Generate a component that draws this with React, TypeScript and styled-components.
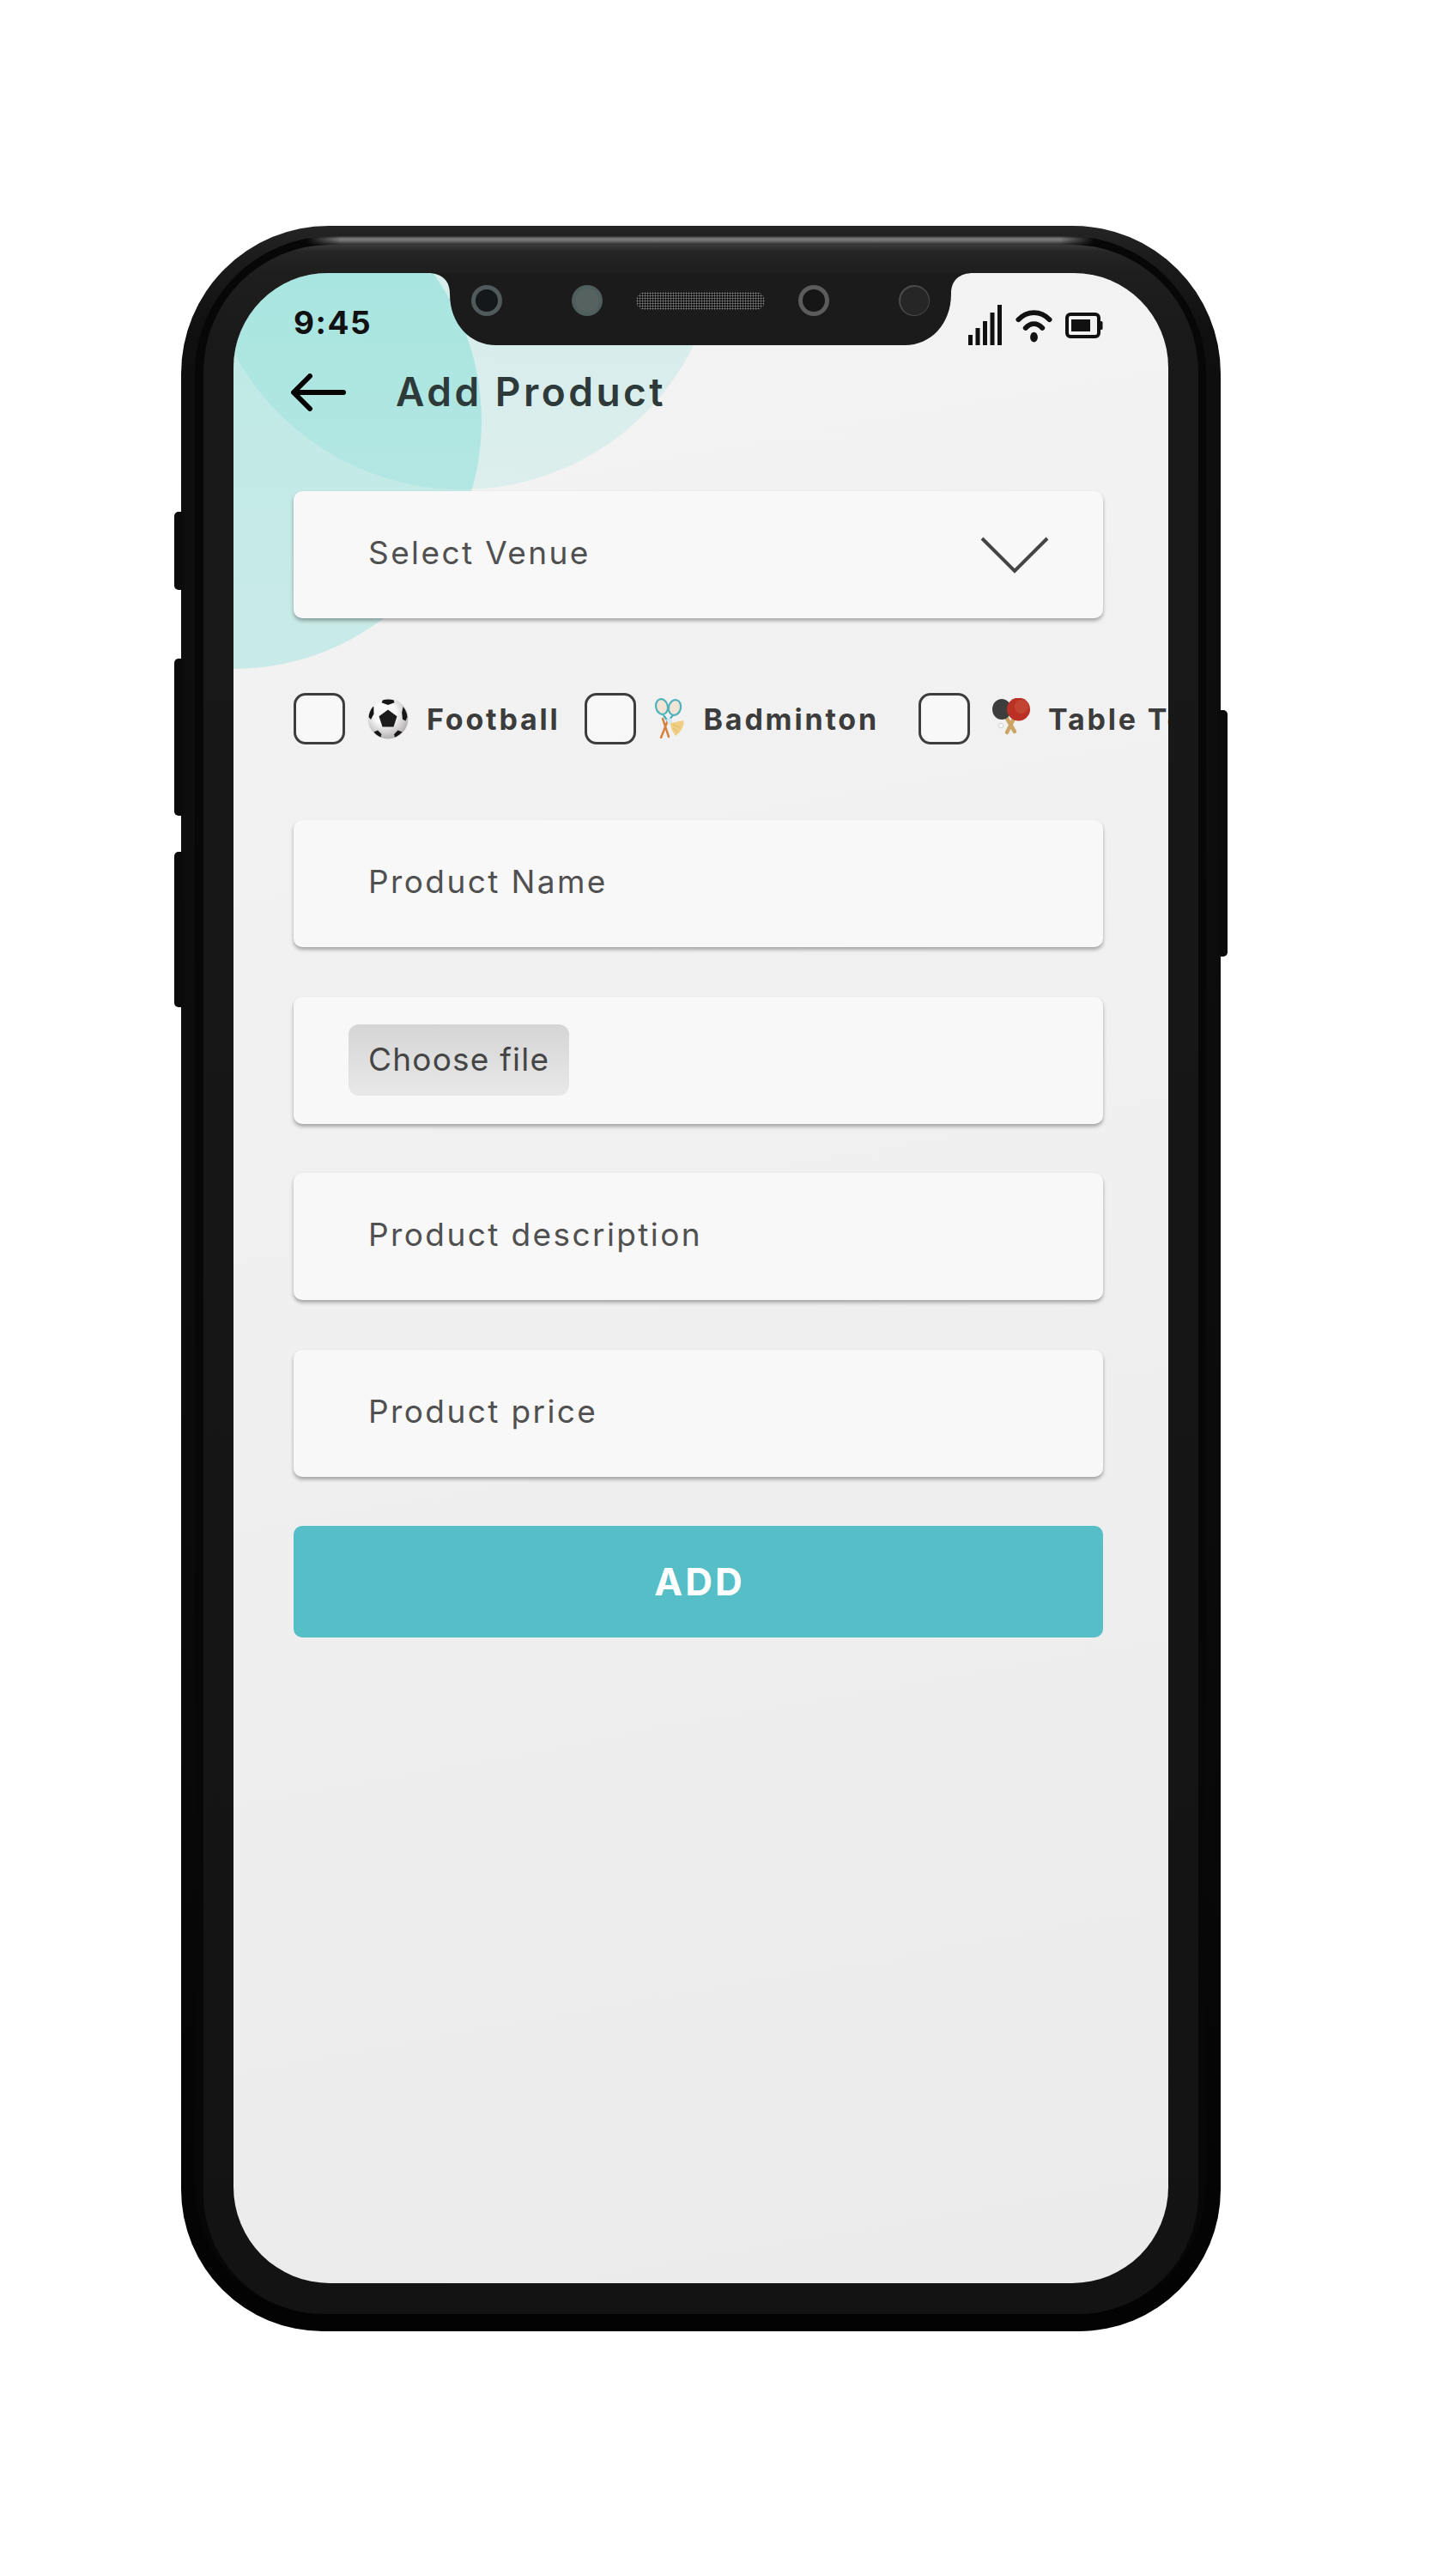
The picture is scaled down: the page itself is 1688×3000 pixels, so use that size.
import styled, { createGlobalStyle } from "styled-components";

const GlobalStyle = createGlobalStyle`
  html, body {
    margin: 0;
    background: #fff;
  }
  * {
    box-sizing: border-box;
  }
`;

const Page = styled.div`
  min-height: 3000px;
  padding: 263px 0 0 211px;
  background: #fff;
`;

const Frame = styled.div`
  position: relative;
  width: 1211px;
  height: 2452px;
  padding: 12px 17px 20px 16px;
  border-radius: 172px 172px 165px 165px;
  background: linear-gradient(to bottom, #242424 0, #1b1b1b 40px, #0f0f0f 130px, #0b0b0b 60%, #030303 100%);
`;

const Band = styled.div`
  position: relative;
  height: 100%;
  padding: 10px 9px 0 10px;
  border-radius: 160px 160px 150px 150px;
  background: #070707;

  &::before {
    content: "";
    position: absolute;
    top: 0;
    left: 130px;
    right: 130px;
    height: 10px;
    background: linear-gradient(to bottom, #2c2c2c, #7e7e7e 30%, #6e6e6e 55%, #2a2a2a);
    mask-image: linear-gradient(to right, transparent, #000 40px, #000 calc(100% - 40px), transparent);
  }
`;

const Bezel = styled.div`
  height: 100%;
  padding: 33px 35px 36px 35px;
  border-radius: 148px 148px 140px 140px;
  background: linear-gradient(to bottom, #3a3a3a 0, #252525 8px, #1e1e1e 33px, #191919 120px, #131313 100%);
`;

const SideButton = styled.div<{ $side: "left" | "right"; $top: number; $height: number }>`
  position: absolute;
  ${(p) => p.$side}: -8px;
  top: ${(p) => p.$top}px;
  width: 12px;
  height: ${(p) => p.$height}px;
  border-radius: ${(p) => (p.$side === "left" ? "5px 0 0 5px" : "0 5px 5px 0")};
  background: #0b0b0b;
`;

const Screen = styled.div`
  position: relative;
  height: 100%;
  overflow: hidden;
  padding: 37px 76px 0 70px;
  border-radius: 110px 110px 112px 112px;
  background: linear-gradient(170deg, #f3f3f3 0, #f0f0f0 45%, #ebebeb 100%);
  font-family: "Inter", "Liberation Sans", sans-serif;
`;

const Blob = styled.div<{ $x: number; $y: number; $r: number; $alpha: number }>`
  position: absolute;
  left: ${(p) => p.$x - p.$r}px;
  top: ${(p) => p.$y - p.$r}px;
  width: ${(p) => p.$r * 2}px;
  height: ${(p) => p.$r * 2}px;
  border-radius: 50%;
  background: linear-gradient(
    to bottom,
    rgba(56, 208, 196, ${(p) => p.$alpha + 0.06}),
    rgba(56, 208, 196, ${(p) => p.$alpha - 0.02})
  );
`;

const Notch = styled.div`
  position: absolute;
  top: 0;
  left: 226px;
  width: 636px;
  height: 84px;
  padding: 14px 0 0 51px;

  svg {
    position: absolute;
    inset: 0;
  }
`;

const NotchRow = styled.div`
  position: relative;
  display: flex;
  align-items: center;
  gap: 39px;
`;

const SensorPair = styled.div`
  display: flex;
  gap: 81px;
`;

const Sensor = styled.div<{ $ring: string; $core: string; $coreSize: number }>`
  display: flex;
  align-items: center;
  justify-content: center;
  width: 36px;
  height: 36px;
  border-radius: 50%;
  background: ${(p) => p.$ring};

  &::after {
    content: "";
    width: ${(p) => p.$coreSize}px;
    height: ${(p) => p.$coreSize}px;
    border-radius: 50%;
    background: ${(p) => p.$core};
  }
`;

const Speaker = styled.div`
  width: 150px;
  height: 21px;
  border-radius: 11px;
  background-color: #0e0e0e;
  background-image: radial-gradient(#7a7a7a 0.9px, transparent 1.2px);
  background-size: 3px 3px;
`;

const StatusBar = styled.div`
  position: relative;
  display: flex;
  align-items: center;
  justify-content: space-between;
  height: 47px;
`;

const Clock = styled.span`
  font-size: 37px;
  font-weight: 700;
  letter-spacing: 1.5px;
  color: #111;
  line-height: 1;
  margin-top: -6px;
`;

const StatusIcons = styled.div`
  display: flex;
  align-items: flex-start;
  gap: 15px;

  svg {
    display: block;
  }
`;

const Header = styled.div`
  position: relative;
  display: flex;
  align-items: center;
  gap: 58px;
  height: 42px;
  margin: 34px 0 94px -3px;
`;

const Title = styled.h1`
  margin: -2px 0 0;
  font-size: 46px;
  font-weight: 600;
  letter-spacing: 3.5px;
  color: #2e3a3a;
`;

const Field = styled.div`
  position: relative;
  display: flex;
  align-items: center;
  justify-content: space-between;
  height: 148px;
  padding: 0 63px 0 87px;
  border-radius: 10px;
  background: #f8f8f8;
  box-shadow: 0 3px 4px rgba(0, 0, 0, 0.32);
`;

const Placeholder = styled.span`
  margin-top: -5px;
  font-size: 37px;
  letter-spacing: 2.4px;
  color: #505050;
`;

const Chevron = styled.svg`
  margin-top: 2px;
`;

const FileField = styled(Field)`
  padding-left: 64px;
`;

const FileButton = styled.div`
  display: flex;
  align-items: center;
  width: 257px;
  height: 83px;
  padding: 0 0 3px 23px;
  border-radius: 12px;
  background: linear-gradient(to bottom, #d5d5d5, #e8e8e8);
  font-size: 37px;
  letter-spacing: 1.2px;
  color: #454545;
`;

const Sports = styled.div`
  position: relative;
  display: flex;
  align-items: center;
  margin: 87px 0 88px;
`;

const Sport = styled.div<{ $after: number }>`
  display: flex;
  align-items: center;
  flex-shrink: 0;
  margin-right: ${(p) => p.$after}px;
`;

const Check = styled.div`
  width: 60px;
  height: 60px;
  border: 3px solid #3d3d3d;
  border-radius: 14px;
  background: #f8f8f8;
`;

const SportIcon = styled.svg<{ $w: number; $lead: number }>`
  display: block;
  width: ${(p) => p.$w}px;
  height: 48px;
  margin: 0 22px 0 ${(p) => p.$lead}px;
`;

const SportName = styled.span`
  margin-left: -1px;
  font-size: 34px;
  font-weight: 700;
  letter-spacing: 2.8px;
  color: #3c3c3c;
  white-space: nowrap;
`;

const Fields = styled.div`
  display: flex;
  flex-direction: column;
  gap: 57.5px;
`;

const AddButton = styled.div`
  display: flex;
  align-items: center;
  justify-content: center;
  height: 130px;
  border-radius: 10px;
  background: #55bec6;
  font-size: 44px;
  font-weight: 700;
  letter-spacing: 3px;
  color: #fff;
  text-indent: 3px;
`;

const Football = () => (
  <SportIcon $w={48} $lead={26} viewBox="0 0 48 48">
    <defs>
      <radialGradient id="ball" cx="0.42" cy="0.36" r="0.72">
        <stop offset="0.4" stopColor="#f8f8f8" />
        <stop offset="1" stopColor="#a4a0a0" />
      </radialGradient>
    </defs>
    <circle cx="24" cy="24" r="23.5" fill="url(#ball)" />
    <path d="M24 13.500l10.500 7.800-4 12.200H17.500l-4-12.200z" fill="#1c1c1c" />
    <path d="M18 2.300c4-1 8.500-1 12.500 0l1 3-7.500 2.700-7.500-2.700z" fill="#161616" />
    <path d="M6.500 10c-3 3.500-4.600 7.500-5 12l2.500 3 3.500-6.500-.2-8.500z" fill="#161616" />
    <path d="M41.500 10c3 3.500 4.600 7.500 5 12l-2 4.500-3.500-1.800-.8-8z" fill="#161616" />
    <path d="M7.500 39.500l4.500-2 4.500 4.500-1 3.500c-3.200-1.300-6-3.500-8-6z" fill="#161616" />
    <path d="M40.500 39.500l-5-2-4.500 4.800 1 3.200c3.200-1.300 6-3.300 8.500-6z" fill="#161616" />
  </SportIcon>
);

const Badminton = () => (
  <SportIcon $w={36} $lead={22} viewBox="0 0 36 48">
    <path d="M7 46l8-20M16 45L9 24" stroke="#d67f3c" strokeWidth="2.400" strokeLinecap="round" />
    <path d="M10 20l5 7M21 20l-6 7" stroke="#46aeb8" strokeWidth="2.200" />
    <ellipse cx="8" cy="10" rx="6.800" ry="9" transform="rotate(-14 8 10)" fill="#f2e4d4" stroke="#4fb3bd" strokeWidth="2.200" />
    <ellipse cx="23" cy="11" rx="7" ry="9" transform="rotate(14 23 11)" fill="#f2e4d4" stroke="#4fb3bd" strokeWidth="2.200" />
    <path d="M18 29l15-3c1.500 4-1 12-9 18-3-4-6-9-6-15z" fill="#f0cf84" />
    <path d="M21 31l8 3M21 35l5 4" stroke="#dcb765" strokeWidth="1" />
    <path d="M13 25l5-2 3 5-5 3z" fill="#d7e6f0" />
  </SportIcon>
);

const TableTennis = () => (
  <SportIcon $w={44} $lead={26} viewBox="0 0 44 48">
    <path d="M16 22l10 17M26 22l-9 18" stroke="#cda566" strokeWidth="4.500" strokeLinecap="round" />
    <ellipse cx="11" cy="13" rx="11" ry="12" fill="#3d3d3d" />
    <circle cx="30.500" cy="13" r="13.500" fill="#bb3125" />
    <circle cx="34" cy="10" r="8" fill="#c9563c" opacity="0.55" />
    <circle cx="10" cy="32" r="2.800" fill="#fafafa" stroke="#d2d2d2" />
  </SportIcon>
);

const SPORTS = [
  { name: "Football", icon: <Football />, after: 28 },
  { name: "Badminton", icon: <Badminton />, after: 46 },
  { name: "Table Tennis", icon: <TableTennis />, after: 0 },
];

export default function App() {
  return (
    <Page>
      <GlobalStyle />
      <Frame>
        <SideButton $side="left" $top={333} $height={91} />
        <SideButton $side="left" $top={504} $height={183} />
        <SideButton $side="left" $top={729} $height={181} />
        <SideButton $side="right" $top={564} $height={287} />
        <Band>
          <Bezel>
            <Screen>
              <Blob $x={266} $y={-49} $r={301} $alpha={0.14} />
              <Blob $x={0} $y={172} $r={289} $alpha={0.24} />

              <StatusBar>
                <Clock>9:45</Clock>
                <StatusIcons>
                  <svg width="40" height="47" viewBox="0 0 40 47" fill="#111">
                    <rect x="0" y="35" width="5" height="12" />
                    <rect x="8.500" y="27" width="5" height="20" />
                    <rect x="17" y="19" width="5" height="28" />
                    <rect x="25.500" y="9" width="5" height="38" />
                    <rect x="34" y="0" width="5" height="47" />
                  </svg>
                  <svg width="43" height="42" viewBox="0 0 44 42" fill="none" stroke="#111" strokeWidth="6" strokeLinecap="round" style={{ marginTop: 3 }}>
                    <path d="M3.500 14C14 3 30 3 40.500 14" />
                    <path d="M12 24C18 17.500 26 17.500 32 24" />
                    <ellipse cx="22" cy="35" rx="4.500" ry="6" fill="#111" stroke="none" />
                  </svg>
                  <svg width="44" height="30" viewBox="0 0 44 30" style={{ marginTop: 9 }}>
                    <rect x="2" y="2" width="37" height="26" rx="4" fill="none" stroke="#111" strokeWidth="4" />
                    <rect x="7" y="8" width="22" height="14" fill="#111" />
                    <rect x="40" y="10" width="3.500" height="10" rx="1.500" fill="#111" />
                  </svg>
                </StatusIcons>
              </StatusBar>

              <Header>
                <svg width="64" height="44" viewBox="0 0 64 44" fill="none" stroke="#050505" strokeWidth="6" strokeLinecap="round" strokeLinejoin="round">
                  <path d="M61 22H4" />
                  <path d="M22 3L3 22l19 19" />
                </svg>
                <Title>Add Product</Title>
              </Header>

              <Field>
                <Placeholder>Select Venue</Placeholder>
                <Chevron width="80" height="44" viewBox="0 0 80 44" fill="none" stroke="#454545" strokeWidth="4">
                  <path d="M2 2l38 38L78 2" />
                </Chevron>
              </Field>

              <Sports>
                {SPORTS.map((sport) => (
                  <Sport key={sport.name} $after={sport.after}>
                    <Check />
                    {sport.icon}
                    <SportName>{sport.name}</SportName>
                  </Sport>
                ))}
              </Sports>

              <Fields>
                <Field>
                  <Placeholder>Product Name</Placeholder>
                </Field>
                <FileField>
                  <FileButton>Choose file</FileButton>
                </FileField>
                <Field>
                  <Placeholder>Product description</Placeholder>
                </Field>
                <Field>
                  <Placeholder>Product price</Placeholder>
                </Field>
                <AddButton>ADD</AddButton>
              </Fields>

              <Notch>
                <svg width="636" height="84" viewBox="0 0 636 84">
                  <path d="M0 0C16 0 26 8 26 24C26 60 50 84 80 84L556 84C586 84 610 60 610 24C610 8 620 0 636 0Z" fill="#1b1b1b" />
                </svg>
                <NotchRow>
                  <SensorPair>
                    <Sensor $ring="#505a5a" $core="#14181a" $coreSize={26} />
                    <Sensor $ring="#4f5d5c" $core="#55625f" $coreSize={28} />
                  </SensorPair>
                  <Speaker />
                  <SensorPair>
                    <Sensor $ring="#5c5c5c" $core="#161616" $coreSize={26} />
                    <Sensor $ring="#4a4a4a" $core="#262626" $coreSize={33} />
                  </SensorPair>
                </NotchRow>
              </Notch>
            </Screen>
          </Bezel>
        </Band>
      </Frame>
    </Page>
  );
}
